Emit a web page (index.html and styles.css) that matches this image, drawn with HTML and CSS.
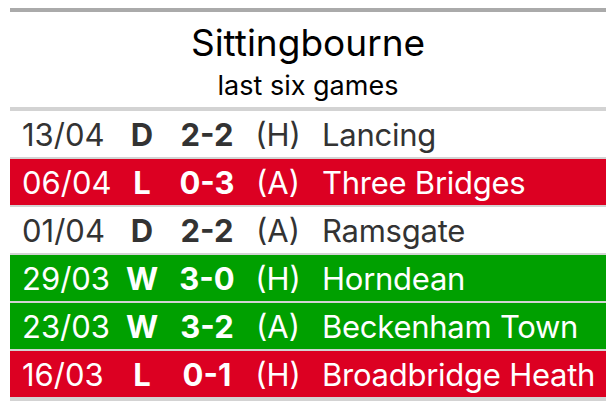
FILE: index.html
```html
<!DOCTYPE html>
<html>
<head>
<meta charset="utf-8">
<link rel="stylesheet" href="styles.css">
</head>
<body>
<div class="card">
  <header class="head">
    <h1 class="title">Sittingbourne</h1>
    <p class="sub">last six games</p>
  </header>
  <div class="rows">
    <div class="row draw"><span class="date">13/04</span><span class="res">D</span><span class="score">2-2</span><span class="ha">(H)</span><span class="opp">Lancing</span></div>
    <div class="row loss"><span class="date">06/04</span><span class="res">L</span><span class="score">0-3</span><span class="ha">(A)</span><span class="opp">Three Bridges</span></div>
    <div class="row draw"><span class="date">01/04</span><span class="res">D</span><span class="score">2-2</span><span class="ha">(A)</span><span class="opp">Ramsgate</span></div>
    <div class="row win"><span class="date">29/03</span><span class="res">W</span><span class="score">3-0</span><span class="ha">(H)</span><span class="opp">Horndean</span></div>
    <div class="row win"><span class="date">23/03</span><span class="res">W</span><span class="score">3-2</span><span class="ha">(A)</span><span class="opp">Beckenham Town</span></div>
    <div class="row loss"><span class="date">16/03</span><span class="res">L</span><span class="score">0-1</span><span class="ha">(H)</span><span class="opp">Broadbridge Heath</span></div>
  </div>
</div>
</body>
</html>
```
FILE: styles.css
```css
html, body {
  margin: 0;
  background: #fff;
}
body {
  padding: 8px 10px 0 10px;
  font-family: Inter, "Liberation Sans", sans-serif;
}
.card {
  width: 596px;
}
.head {
  border-top: 4px solid #aaaaaa;
  height: 95px;
  display: flex;
  flex-direction: column;
  align-items: center;
  color: #000;
}
.title {
  margin: 9px 0 0 0;
  font-size: 37px;
  font-weight: 400;
  line-height: 44px;
}
.sub {
  margin: 5px 0 0 0;
  font-size: 27px;
  line-height: 32px;
}
.rows {
  display: flex;
  flex-direction: column;
  gap: 2px;
  background: #d3d3d3;
  padding: 4px 0;
}
.row {
  height: 46px;
  display: grid;
  grid-template-columns: 108px 48px 82px 60px 1fr;
  align-items: center;
  font-size: 31px;
  white-space: nowrap;
}
.draw { background: #fff; color: #333; }
.loss { background: #dc0022; color: #fff; }
.win { background: #00a000; color: #fff; }
.date { padding-left: 12px; }
.res, .score { font-weight: 700; text-align: center; }
.ha { text-align: center; }
.opp { padding-left: 14px; letter-spacing: -0.25px; }
```
